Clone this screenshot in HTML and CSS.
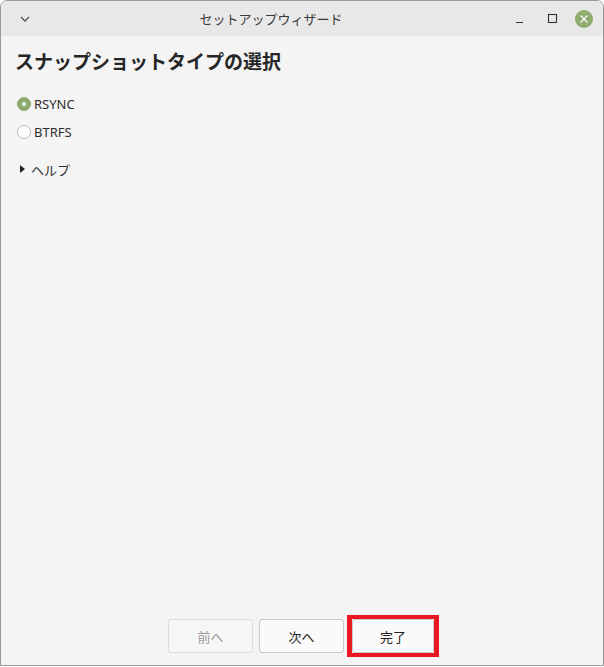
FILE: index.html
```html
<!DOCTYPE html>
<html lang="ja">
<head>
<meta charset="utf-8">
<link rel="stylesheet" href="styles.css">
</head>
<body>
<div class="window">
  <header class="titlebar">
    <div class="tb-left">
      <svg width="12" height="8" viewBox="0 0 12 8"><path d="M2 2 L6 6 L10 2" fill="none" stroke="#555" stroke-width="1.3"/></svg>
    </div>
    <div class="tb-title">セットアップウィザード</div>
    <div class="tb-right">
      <svg class="tb-btn" width="14" height="14" viewBox="0 0 14 14"><path d="M3 10.5 H10" stroke="#333" stroke-width="1.2"/></svg>
      <svg class="tb-btn max" width="14" height="14" viewBox="0 0 14 14"><rect x="2.5" y="2.5" width="8" height="8" fill="none" stroke="#333" stroke-width="1.1"/></svg>
      <span class="tb-close">
        <svg width="18" height="18" viewBox="0 0 18 18"><circle cx="9" cy="9" r="9" fill="#8fab6c"/><path d="M5.5 5.5 L12.5 12.5 M12.5 5.5 L5.5 12.5" stroke="#fff" stroke-width="1.2"/></svg>
      </span>
    </div>
  </header>
  <main class="content">
    <h1 class="heading">スナップショットタイプの選択</h1>
    <div class="options">
      <label class="radio"><span class="dot checked"></span><span>RSYNC</span></label>
      <label class="radio"><span class="dot"></span><span>BTRFS</span></label>
    </div>
    <div class="expander"><span class="tri"></span><span>ヘルプ</span></div>
    <div class="spacer"></div>
    <div class="buttons">
      <button class="btn disabled">前へ</button>
      <button class="btn">次へ</button>
      <span class="mark"><button class="btn">完了</button></span>
    </div>
  </main>
</div>
</body>
</html>
```
FILE: styles.css
```css
* { box-sizing: border-box; }
html, body { margin: 0; padding: 0; background: #ffffff; }
body { width: 604px; height: 667px; font-family: "Noto Sans CJK JP", "Noto Sans", sans-serif; color: #2e2e2e; }
.window {
  width: 604px; height: 666px;
  border: 1px solid #9a9a9a;
  border-radius: 7px 7px 0 0;
  background: #f4f4f4;
  display: flex; flex-direction: column;
  overflow: hidden;
}
.titlebar {
  height: 35px; flex: none;
  background: #e8e8e8;
  display: flex; align-items: center;
  position: relative;
}
.tb-left { width: 40px; display: flex; justify-content: center; padding-left: 7px; padding-top: 1px; }
.tb-title {
  position: absolute; left: 0; right: 0; top: 0; height: 35px;
  display: flex; align-items: center; justify-content: center;
  font-size: 13px; color: #3a3a3a; pointer-events: none;
  padding-right: 62px;
}
.tb-right { margin-left: auto; display: flex; align-items: center; gap: 17px; padding-right: 10px; }
.tb-btn { display: block; }
.tb-btn.max { margin-left: 2px; margin-right: -2px; }
.tb-close { display: block; width: 18px; height: 18px; }
.tb-close svg { display: block; }
.content { flex: 1; display: flex; flex-direction: column; padding: 12px 14px 12px 14px; }
.heading { margin: 0; font-size: 19px; font-weight: bold; line-height: 26px; color: #262626; letter-spacing: 0; }
.options { margin-top: 21px; display: flex; flex-direction: column; gap: 10px; }
.radio { display: flex; align-items: center; gap: 3px; font-family: "Noto Sans", sans-serif; font-size: 13px; height: 18px; color: #2e2e2e; padding-left: 2px; }
.dot { width: 14px; height: 14px; border-radius: 50%; border: 1px solid #bdbdbd; background: #fff; flex: none; position: relative; }
.dot.checked { background: #8fab6c; border-color: #8fab6c; }
.dot.checked::after { content: ""; position: absolute; left: 4px; top: 4px; width: 4px; height: 4px; border-radius: 50%; background: #fff; }
.expander { margin-top: 19px; display: flex; align-items: center; gap: 6px; font-size: 13px; height: 18px; padding-left: 5px; }
.tri { width: 0; height: 0; border-top: 4.5px solid transparent; border-bottom: 4.5px solid transparent; border-left: 5px solid #222; }
.spacer { flex: 1; }
.buttons { display: flex; justify-content: center; align-items: center; gap: 6px; padding-right: 2px; }
.btn {
  width: 85px; height: 34px;
  border: 1px solid #c9c9c9; border-radius: 3px;
  background: #fafafa;
  font-family: "Noto Sans CJK JP", sans-serif; font-size: 13px; color: #222;
}
.btn.disabled { border-color: #dcdcdc; color: #9a9a9a; background: #f6f6f6; }
.mark { display: block; position: relative; margin-left: 2px; }
.mark .btn { display: block; width: 82px; }
.mark::after {
  content: ""; position: absolute;
  left: -5px; right: -5px; top: -4px; bottom: -4px;
  border: 4px solid #e81820; border-left-width: 5px; border-right-width: 5px;
  pointer-events: none;
}
```
